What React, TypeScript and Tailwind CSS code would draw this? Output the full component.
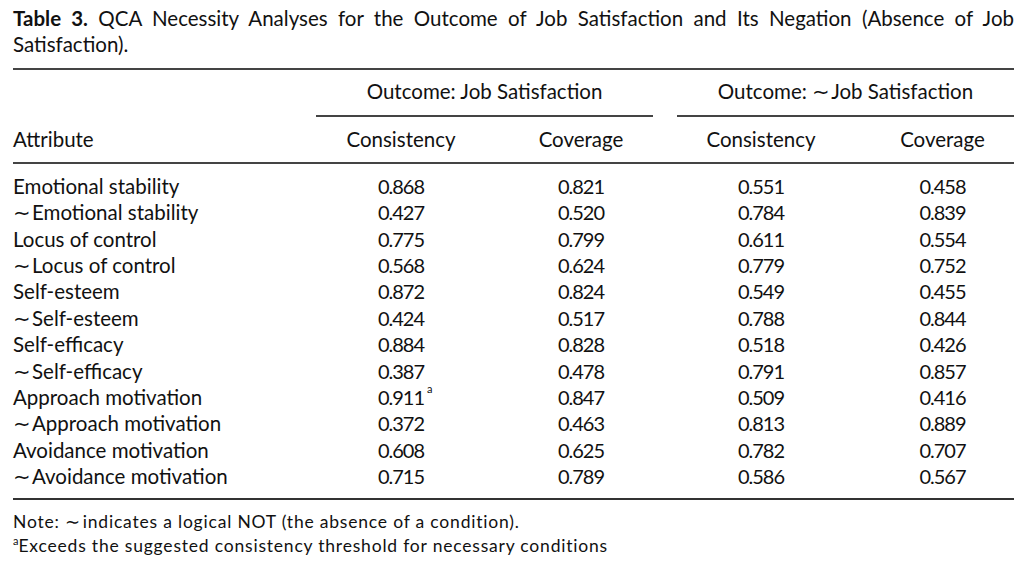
const ROWS: [string, string, string, string, string][] = [
  ['Emotional stability', '0.868', '0.821', '0.551', '0.458'],
  ['~Emotional stability', '0.427', '0.520', '0.784', '0.839'],
  ['Locus of control', '0.775', '0.799', '0.611', '0.554'],
  ['~Locus of control', '0.568', '0.624', '0.779', '0.752'],
  ['Self-esteem', '0.872', '0.824', '0.549', '0.455'],
  ['~Self-esteem', '0.424', '0.517', '0.788', '0.844'],
  ['Self-efficacy', '0.884', '0.828', '0.518', '0.426'],
  ['~Self-efficacy', '0.387', '0.478', '0.791', '0.857'],
  ['Approach motivation', '0.911', '0.847', '0.509', '0.416'],
  ['~Approach motivation', '0.372', '0.463', '0.813', '0.889'],
  ['Avoidance motivation', '0.608', '0.625', '0.782', '0.707'],
  ['~Avoidance motivation', '0.715', '0.789', '0.586', '0.567'],
]

const GRID = 'grid grid-cols-[298px_180px_180px_180px_163px]'
const NUM = 'text-center text-[20px] tracking-[-1px]'

function Label({ text }: { text: string }) {
  if (text.startsWith('~')) {
    return (
      <span>
        <span className="mr-[1px]">∼</span>
        {text.slice(1)}
      </span>
    )
  }
  return <span>{text}</span>
}

export default function App() {
  return (
    <div
      className="w-[1022px] h-[567px] bg-white text-[#111] overflow-hidden"
      style={{ fontFamily: 'Lato, "Open Sans", sans-serif' }}
    >
      <div className="pl-[13px] pr-[8px] text-[20.5px]">
        {/* Caption */}
        <div className="leading-[26px] pt-[5px]">
          <p className="text-justify [text-align-last:justify]">
            <span className="font-bold">Table 3.</span> QCA Necessity Analyses for the Outcome of Job Satisfaction and
            Its Negation (Absence of Job
          </p>
          <p>Satisfaction).</p>
        </div>

        <div className="w-[1001px] mt-[11px] border-t-2 border-[#444]" />

        {/* Group headers */}
        <div className={`${GRID} leading-[26px]`}>
          <div />
          <div className="col-span-2 ml-[5px] mr-[18px] pt-[8px] text-center">
            <div className="pb-[11px]">Outcome: Job Satisfaction</div>
            <div className="border-t-2 border-[#444]" />
          </div>
          <div className="col-span-2 ml-[6px] pt-[8px] text-center">
            <div className="pb-[11px]">
              Outcome: <span className="mr-[1px]">∼</span>Job Satisfaction
            </div>
            <div className="border-t-2 border-[#444]" />
          </div>
        </div>

        <div className={`${GRID} leading-[26px] pt-[9px] pb-[10px]`}>
          <div>Attribute</div>
          <div className="text-center">Consistency</div>
          <div className="text-center">Coverage</div>
          <div className="text-center">Consistency</div>
          <div className="text-center pl-[20px]">Coverage</div>
        </div>

        <div className="w-[1001px] border-t-2 border-[#444]" />

        {/* Body */}
        <div className="pt-[9px] pb-[9px]">
          {ROWS.map(r => (
            <div key={r[0]} className={`${GRID} leading-[26.36px]`}>
              <div>
                <Label text={r[0]} />
              </div>
              <div className={NUM}>
                <span className="relative">
                  {r[1]}
                  {r[0] === 'Approach motivation' && (
                    <span className="absolute left-full top-[-9px] ml-[3px] text-[11px] tracking-normal">a</span>
                  )}
                </span>
              </div>
              <div className={NUM}>{r[2]}</div>
              <div className={NUM}>{r[3]}</div>
              <div className={`${NUM} pl-[20px]`}>{r[4]}</div>
            </div>
          ))}
        </div>

        <div className="w-[1001px] border-t-2 border-[#333]" />

        {/* Notes */}
        <div className="pt-[10px] text-[17.5px] leading-[24px] tracking-[0.8px]">
          <p>
            Note: <span className="mr-[2px]">∼</span>indicates a logical NOT (the absence of a condition).
          </p>
          <p>
            <span className="relative top-[-7px] text-[11px] tracking-normal">a</span>Exceeds the suggested
            consistency threshold for necessary conditions
          </p>
        </div>
      </div>
    </div>
  )
}
